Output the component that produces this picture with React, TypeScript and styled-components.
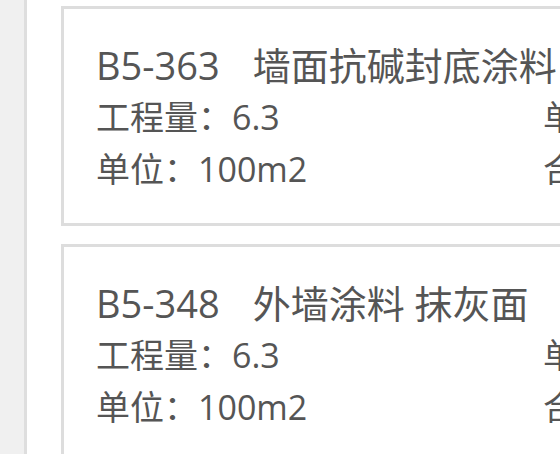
import React from 'react'
import styled, { createGlobalStyle } from 'styled-components'

const GlobalStyle = createGlobalStyle`
  html, body {
    margin: 0;
    padding: 0;
    background: #ffffff;
    overflow: hidden;
  }
  body {
    font-family: "Open Sans", "Noto Sans CJK SC", sans-serif;
    color: #555555;
  }
`

const Page = styled.div`
  display: flex;
  width: 560px;
  height: 454px;
  overflow: hidden;
`

const Sidebar = styled.div`
  flex: 0 0 24px;
  background: #f0f0f0;
  border-right: 3px solid #dedede;
`

const List = styled.div`
  display: flex;
  flex-direction: column;
  gap: 18px;
  padding: 6px 0 0 34px;
`

const Card = styled.div`
  width: 700px;
  height: 214px;
  flex: 0 0 auto;
  box-sizing: content-box;
  border: 3px solid #dddddd;
  padding: 0 0 0 32px;
  display: flex;
  flex-direction: column;
  justify-content: center;
`

const Title = styled.div`
  display: flex;
  gap: 33px;
  font-size: 38px;
  line-height: 52px;
  white-space: nowrap;
  margin-top: 2px;
`

const Row = styled.div`
  display: grid;
  grid-template-columns: 447px 1fr;
  font-size: 34px;
  line-height: 52px;
  white-space: nowrap;
`

interface IItem {
  code: string
  name: string
  amount: string
  unit: string
  price: string
  total: string
}

const items: IItem[] = [
  { code: 'B5-363', name: '墙面抗碱封底涂料', amount: '6.3', unit: '100m2', price: '1280.5', total: '8067.15' },
  { code: 'B5-348', name: '外墙涂料 抹灰面', amount: '6.3', unit: '100m2', price: '2350.2', total: '14806.26' },
]

export default function App(): React.ReactElement {
  return (
    <Page>
      <GlobalStyle />
      <Sidebar />
      <List>
        {items.map((item) => (
          <Card key={item.code}>
            <Title>
              <span>{item.code}</span>
              <span>{item.name}</span>
            </Title>
            <Row>
              <span>工程量：{item.amount}</span>
              <span>单价：{item.price}</span>
            </Row>
            <Row>
              <span>单位：{item.unit}</span>
              <span>合价：{item.total}</span>
            </Row>
          </Card>
        ))}
      </List>
    </Page>
  )
}
